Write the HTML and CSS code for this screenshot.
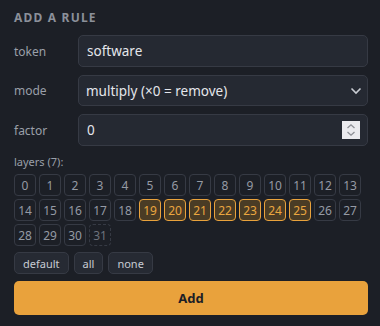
FILE: index.html
```html
<!DOCTYPE html>
<html lang="en">
<head>
    <meta charset="UTF-8">
    <meta name="viewport" content="width=device-width, initial-scale=1.0">
    <title>Add a rule</title>
    <link rel="stylesheet" href="styles.css">
</head>
<body>
    <div class="panel">
        <h3 class="title">Add a rule</h3>
        <div class="row">
            <label class="lbl">token</label>
            <input class="field" type="text" value="software">
        </div>
        <div class="row">
            <label class="lbl">mode</label>
            <div class="wrap">
                <select class="field">
                    <option>multiply (×0 = remove)</option>
                    <option>add</option>
                </select>
                <svg class="chev" width="12" height="8" viewBox="0 0 12 8"><path d="M1.5 1.5 L6 6 L10.5 1.5" fill="none" stroke="#c9ccd3" stroke-width="1.6"/></svg>
            </div>
        </div>
        <div class="row">
            <label class="lbl">factor</label>
            <div class="wrap">
                <input class="field" type="number" value="0">
                <span class="spin">
                    <svg width="18" height="18" viewBox="0 0 18 18"><path d="M5.5 7 L9 3.8 L12.5 7 M5.5 11 L9 14.2 L12.5 11" fill="none" stroke="#8d8f96" stroke-width="1.3"/></svg>
                </span>
            </div>
        </div>
        <div class="layers-lbl">layers (7):</div>
        <div class="chips" id="chips"></div>
        <div class="presets">
            <button class="preset">default</button>
            <button class="preset">all</button>
            <button class="preset">none</button>
        </div>
        <button class="add">Add</button>
    </div>

    <script>
        // 0~31 레이어 칩 만들기
        var chips = document.getElementById('chips')
        for (var i = 0; i < 32; i++) {
            var b = document.createElement('span')
            b.className = 'chip'
            if (i >= 19 && i <= 25) b.className += ' on'
            if (i === 31) b.className += ' off'
            b.textContent = i
            chips.appendChild(b)
        }
    </script>
</body>
</html>
```
FILE: styles.css
```css
body{
    margin: 0;
    background: #1c1f26;
    font-family: "Noto Sans", "Open Sans", sans-serif;
    color: #d7dae0;
}
.panel{
    padding: 9px 12px 0 14px;
}
.title{
    margin: 0 0 9px 0;
    font-size: 12px;
    font-weight: 700;
    letter-spacing: 1.2px;
    text-transform: uppercase;
    color: #8b909a;
}
.row{
    display: flex;
    align-items: center;
    margin-bottom: 8px;
}
.lbl{
    width: 64px;
    flex: none;
    font-size: 12px;
    color: #9a9fa9;
}
.field{
    flex: 1;
    box-sizing: border-box;
    height: 32px;
    width: 100%;
    padding: 0 8px;
    background: #252932;
    border: 1px solid #363a44;
    border-radius: 5px;
    color: #e4e6eb;
    font-family: inherit;
    font-size: 13.5px;
    outline: none;
}
select.field{
    height: 31px;
    appearance: none;
    -webkit-appearance: none;
    padding-left: 7px;
}
input[type="number"]{
    -moz-appearance: textfield;
}
input[type="number"]::-webkit-inner-spin-button,
input[type="number"]::-webkit-outer-spin-button{
    -webkit-appearance: none;
    margin: 0;
}
.wrap{
    flex: 1;
    position: relative;
}
.chev{
    position: absolute;
    right: 6px;
    top: 12px;
    pointer-events: none;
}
/* 숫자 입력 스핀버튼 (위에 겹쳐서) */
.spin{
    position: absolute;
    right: 8px;
    top: 7px;
    width: 18px;
    height: 18px;
    background: #eaeaee;
    display: block;
}
.spin svg{
    display: block;
}
.layers-lbl{
    font-size: 11px;
    color: #9a9fa9;
    margin: 7px 0 5px 0;
}
.chips{
    display: flex;
    flex-wrap: wrap;
    gap: 3px;
    width: 350px;
}
.chip{
    box-sizing: border-box;
    width: 22px;
    height: 22px;
    border: 1px solid #363a44;
    border-radius: 4px;
    display: flex;
    align-items: center;
    justify-content: center;
    font-size: 12px;
    color: #959aa4;
}
.chip.on{
    border-color: #e9a23c;
    background: #4a3c25;
    color: #eaa740;
}
.chip.off{
    border-style: dashed;
    color: #6d727c;
}
.presets{
    display: flex;
    gap: 5px;
    margin-top: 6px;
}
.preset{
    box-sizing: border-box;
    height: 22px;
    padding: 0 8px;
    background: #262a33;
    border: 1px solid #363a44;
    border-radius: 5px;
    color: #c8ccd4;
    font-family: inherit;
    font-size: 11px;
}
.add{
    display: block;
    width: 100%;
    height: 34px;
    margin-top: 7px;
    background: #e9a23c;
    border: none;
    border-radius: 5px;
    color: #1c1f26;
    font-family: inherit;
    font-size: 13px;
    font-weight: 700;
}
```
